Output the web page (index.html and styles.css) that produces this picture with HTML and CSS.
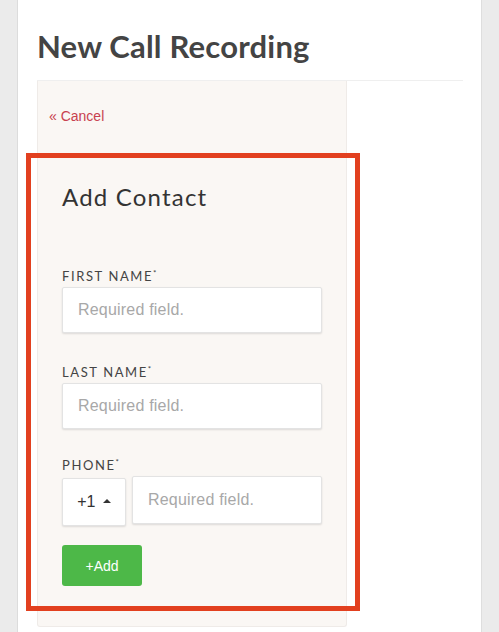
FILE: index.html
```html
<!DOCTYPE html>
<html>
<head>
<meta charset="utf-8">
<link rel="stylesheet" href="styles.css">
</head>
<body>
<div class="page">
  <h1 class="title">New Call Recording</h1>
  <div class="rule"></div>
  <div class="card">
    <a class="cancel" href="#">« Cancel</a>
    <div class="contact">
      <h2 class="contact-title">Add Contact</h2>
      <div class="field field-first">
        <label class="label">First Name<sup class="req">*</sup></label>
        <div class="input">Required field.</div>
      </div>
      <div class="field">
        <label class="label">Last Name<sup class="req">*</sup></label>
        <div class="input">Required field.</div>
      </div>
      <div class="field field-phone">
        <label class="label">Phone<sup class="req">*</sup></label>
        <div class="phone-row">
          <div class="code">+1 <span class="caret"></span></div>
          <div class="input input-phone">Required field.</div>
        </div>
      </div>
      <button class="add-btn">+Add</button>
    </div>
  </div>
  <div class="highlight"></div>
</div>
</body>
</html>
```

FILE: styles.css
```css
html, body {
  margin: 0;
  padding: 0;
}
body {
  background: #ebebeb;
  font-family: "Liberation Sans", Arial, sans-serif;
  height: 632px;
  overflow: hidden;
}
.page {
  position: relative;
  margin-left: 17px;
  width: 426px;
  height: 632px;
  background: #ffffff;
  border-left: 1px solid #dcdcdc;
  border-right: 1px solid #dedede;
  padding: 0 18px 0 19px;
}
.title {
  margin: 0;
  padding-top: 28px;
  font-family: "Lato", sans-serif;
  font-weight: 700;
  font-size: 31px;
  line-height: 36px;
  color: #444444;
  letter-spacing: 0.2px;
}
.rule {
  margin-top: 16px;
  height: 1px;
  background: #efefef;
}
.card {
  width: 308px;
  height: 545px;
  background: #faf7f4;
  border: 1px solid #efebe8;
  border-top: none;
  border-radius: 0 0 3px 3px;
}
.cancel {
  display: block;
  padding: 25px 0 0 11px;
  font-size: 14px;
  line-height: 20px;
  color: #c8414f;
  text-decoration: none;
}
.contact {
  padding: 56px 24px 0 24px;
  display: flex;
  flex-direction: column;
  align-items: flex-start;
}
.contact-title {
  margin: 0;
  font-family: "Lato", sans-serif;
  font-weight: 400;
  font-size: 24px;
  line-height: 30px;
  letter-spacing: 1.2px;
  color: #333333;
}
.field {
  margin-top: 31px;
  display: flex;
  flex-direction: column;
  align-self: stretch;
}
.field-first {
  margin-top: 56px;
}
.field-phone {
  margin-top: 28px;
}
.label {
  font-family: "Lato", sans-serif;
  font-size: 13px;
  line-height: 16px;
  letter-spacing: 1.6px;
  text-transform: uppercase;
  color: #444444;
  margin-bottom: 3px;
}
.req {
  font-size: 8px;
  vertical-align: top;
  line-height: 10px;
  letter-spacing: 0;
}
.input {
  box-sizing: border-box;
  width: 260px;
  height: 46px;
  background: #ffffff;
  border: 1px solid #e3e3e3;
  box-shadow: 0 1px 2px rgba(0, 0, 0, 0.12);
  border-radius: 2px;
  padding: 0 0 0 15px;
  font-size: 16px;
  letter-spacing: 0.2px;
  line-height: 44px;
  color: #a8a8a8;
}
.phone-row {
  display: flex;
  align-items: flex-start;
  gap: 6px;
}
.code {
  box-sizing: border-box;
  width: 64px;
  height: 48px;
  margin-top: 2px;
  background: #ffffff;
  border: 1px solid #e3e3e3;
  box-shadow: 0 1px 2px rgba(0, 0, 0, 0.12);
  border-radius: 2px;
  font-size: 16px;
  line-height: 46px;
  color: #333333;
  text-align: center;
}
.caret {
  display: inline-block;
  width: 0;
  height: 0;
  margin-left: 3px;
  border-left: 4px solid transparent;
  border-right: 4px solid transparent;
  border-bottom: 4px solid #333333;
  vertical-align: 4px;
}
.input-phone {
  width: 190px;
  height: 48px;
  line-height: 46px;
}
.add-btn {
  margin-top: 19px;
  width: 80px;
  height: 41px;
  border: none;
  border-radius: 3px;
  background: #4db848;
  color: #ffffff;
  font-family: "Liberation Sans", Arial, sans-serif;
  font-size: 14px;
  padding: 0;
}
.highlight {
  position: absolute;
  left: 8px;
  top: 153px;
  width: 324px;
  height: 448px;
  border: 5px solid #e2401f;
}
```
